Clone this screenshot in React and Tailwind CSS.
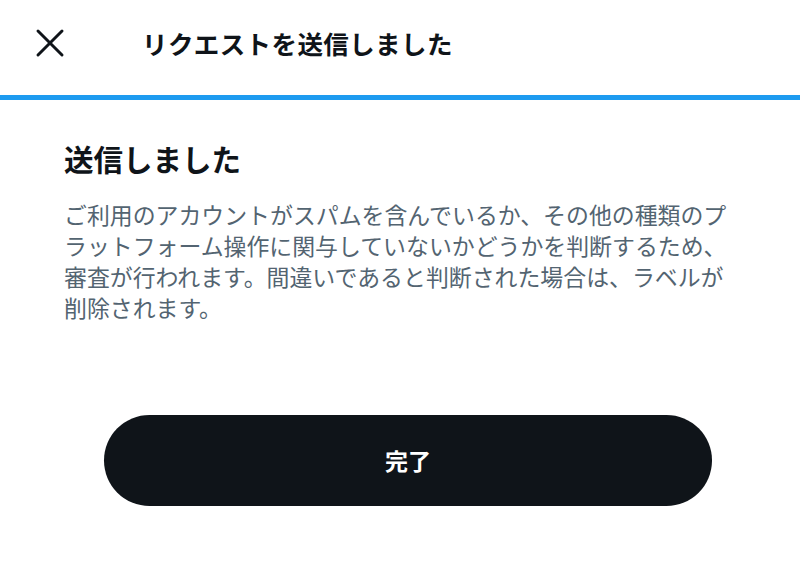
import { X } from 'lucide-react';

const font = { fontFamily: '"Noto Sans CJK JP", "Noto Sans", sans-serif' };

export default function App() {
  return (
    <div className="w-[800px] h-[572px] bg-white overflow-hidden" style={font}>
      {/* Header */}
      <div className="h-[95px] flex items-center pb-[9px]">
        <div className="w-[142px] flex items-center pl-[26px]">
          <X className="w-[48px] h-[48px] text-[#0f1419]" strokeWidth={1.5} />
        </div>
        <h1 className="text-[25.5px] font-bold text-[#0f1419] leading-none tracking-[0.4px]">
          リクエストを送信しました
        </h1>
      </div>
      <div className="h-[5px] bg-[#1d9bf0]" />

      {/* Body */}
      <div className="px-16 pt-[41px]">
        <h2 className="text-[29.5px] font-bold text-[#0f1419] leading-[35px]">送信しました</h2>
        <p className="mt-[23px] text-[22.9px] leading-[31px] text-[#536471]">
          ご利用のアカウントがスパムを含んでいるか、その他の種類のプラットフォーム操作に関与していないかどうかを判断するため、審査が行われます。間違いであると判断された場合は、ラベルが削除されます。
        </p>
      </div>

      <button className="mt-[92px] ml-[104px] w-[608px] h-[91px] rounded-full bg-[#0f1419] text-white text-[23px] font-bold flex items-center justify-center">
        完了
      </button>
    </div>
  );
}
